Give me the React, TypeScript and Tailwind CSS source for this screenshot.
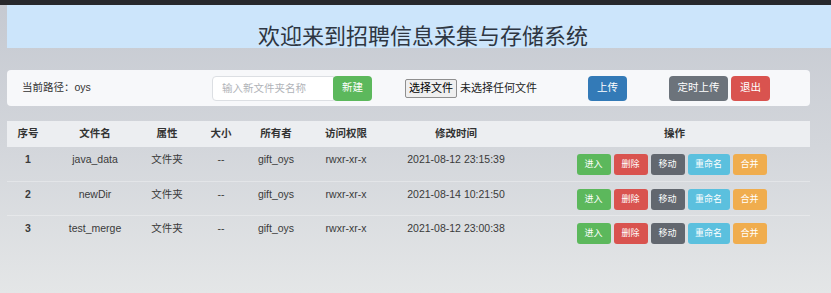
const font = "font-['Liberation_Sans','Noto_Sans_CJK_SC',sans-serif]"

const files = [
  { id: 1, name: "java_data", time: "2021-08-12 23:15:39" },
  { id: 2, name: "newDir", time: "2021-08-14 10:21:50" },
  { id: 3, name: "test_merge", time: "2021-08-12 23:00:38" },
]

const cols = "grid grid-cols-[42px_92px_52px_56px_54px_86px_134px_287px]"

function RowButton({ label, color, wide }: { label: string; color: string; wide?: boolean }) {
  return (
    <button
      className={`${color} ${wide ? "w-[42px]" : "w-[34px]"} h-[21px] rounded-[3px] text-white text-[9px] leading-none flex items-center justify-center`}
    >
      {label}
    </button>
  )
}

export default function App() {
  return (
    <div className={`${font} w-[831px] h-[293px] overflow-hidden bg-gradient-to-b from-[#c5c9d1] via-[#d3d6db] to-[#e4e6e7] text-[#333]`}>
      <div className="h-[5px] bg-[#27282c]" />

      <div className="ml-[7px] h-[43px] bg-[#cce5fb] flex justify-center pt-[14px]">
        <h1 className="text-[22px] leading-[30px] text-[#2e3642] font-['Noto_Sans_CJK_SC',sans-serif] pl-[8px]">
          欢迎来到招聘信息采集与存储系统
        </h1>
      </div>

      <div className="mt-[22px] mx-[7px] w-[803px] h-[36px] bg-[#f7f8fa] rounded-[4px] flex items-center pl-[15px] text-[10.5px]">
        <span className="w-[190px]">当前路径：oys</span>
        <div className="flex">
          <input
            placeholder="输入新文件夹名称"
            className="w-[122px] h-[25px] border border-[#dcdfe3] rounded-l-[4px] bg-white pl-[9px] text-[10.5px] placeholder:text-[#b0b3b8] outline-none"
          />
          <button className="w-[39px] h-[25px] bg-[#5cb85c] text-white rounded-[4px] -ml-[1px]">新建</button>
        </div>
        <div className="ml-[33px] w-[183px] flex items-center">
          <span className="h-[19px] px-[3px] flex items-center bg-[#efefef] border border-[#8f8f8f] rounded-[2px] text-[11px] text-black">
            选择文件
          </span>
          <span className="ml-[3px] text-[11px] text-[#222]">未选择任何文件</span>
        </div>
        <button className="w-[39px] h-[25px] bg-[#337ab7] text-white rounded-[4px]">上传</button>
        <button className="ml-[42px] w-[59px] h-[25px] bg-[#6c737b] text-white rounded-[4px]">定时上传</button>
        <button className="ml-[3px] w-[39px] h-[25px] bg-[#d9534f] text-white rounded-[4px]">退出</button>
      </div>

      <div className="mt-[15px] mx-[7px] w-[803px] text-[10.5px]">
        <div className={`${cols} h-[26px] bg-[#eceef1] items-center font-bold text-center text-[#333]`}>
          <span>序号</span>
          <span>文件名</span>
          <span>属性</span>
          <span>大小</span>
          <span>所有者</span>
          <span>访问权限</span>
          <span>修改时间</span>
          <span className="pl-[16px]">操作</span>
        </div>
        {files.map((f, i) => (
          <div
            key={f.id}
            className={`${cols} h-[34px] text-center text-[#3a3a3a] ${i > 0 ? "border-t border-white/30" : ""}`}
          >
            <span className="pt-[5px] leading-[15px] font-bold">{f.id}</span>
            <span className="pt-[5px] leading-[15px]">{f.name}</span>
            <span className="pt-[5px] leading-[15px]">文件夹</span>
            <span className="pt-[5px] leading-[15px]">--</span>
            <span className="pt-[5px] leading-[15px]">gift_oys</span>
            <span className="pt-[5px] leading-[15px]">rwxr-xr-x</span>
            <span className="pt-[5px] leading-[15px]">{f.time}</span>
            <div className="pt-[7px] pl-[10px] flex justify-center gap-[3px]">
              <RowButton label="进入" color="bg-[#5cb85c]" />
              <RowButton label="删除" color="bg-[#d9534f]" />
              <RowButton label="移动" color="bg-[#62676f]" />
              <RowButton label="重命名" color="bg-[#5bc0de]" wide />
              <RowButton label="合并" color="bg-[#f0ad4e]" />
            </div>
          </div>
        ))}
      </div>
    </div>
  )
}
